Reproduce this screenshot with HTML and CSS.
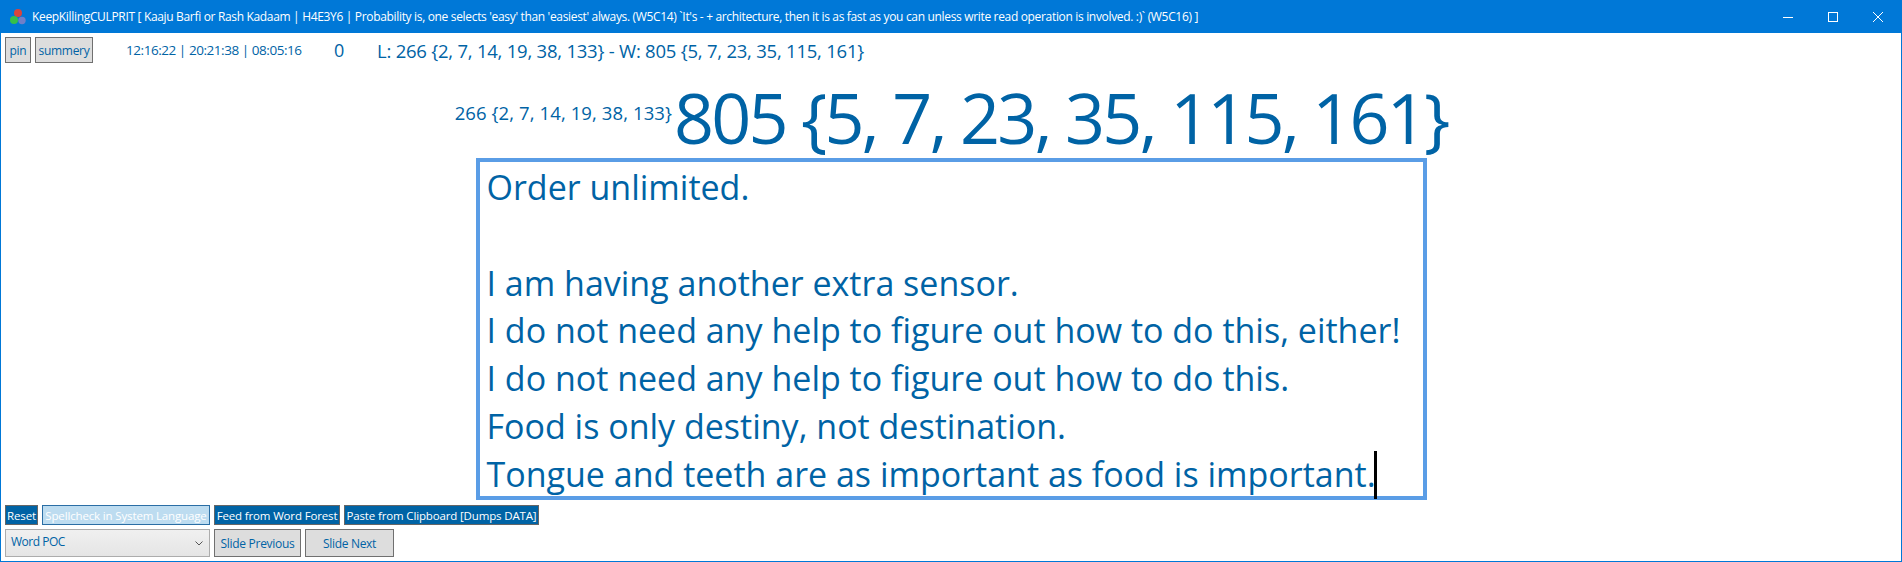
FILE: index.html
```html
<!DOCTYPE html>
<html lang="en">
<head>
<meta charset="utf-8">
<title>KeepKillingCULPRIT</title>
<link rel="stylesheet" href="styles.css">
</head>
<body>
<div class="window">
  <header class="titlebar">
    <svg class="app-icon" width="18" height="18" viewBox="0 0 18 18"><circle cx="9" cy="5" r="4" fill="#d9453c"/><circle cx="5" cy="12" r="4" fill="#35c04a"/><circle cx="13" cy="12.500" r="3.700" fill="#6f7fc8"/></svg>
    <span class="title">KeepKillingCULPRIT [ Kaaju Barfi or Rash Kadaam | H4E3Y6 | Probability is, one selects 'easy' than 'easiest' always. (W5C14) `It's - + architecture, then it is as fast as you can unless write read operation is involved. :)` (W5C16) ]</span>
    <div class="controls">
      <svg width="10" height="10" viewBox="0 0 10 10"><path d="M0 5.500H10" stroke="#fff" fill="none"/></svg>
      <svg width="10" height="10" viewBox="0 0 10 10"><rect x=".5" y=".5" width="9" height="9" stroke="#fff" fill="none"/></svg>
      <svg width="10" height="10" viewBox="0 0 10 10"><path d="M0 0L10 10M10 0L0 10" stroke="#fff" fill="none"/></svg>
    </div>
  </header>
  <div class="toprow">
    <button class="btn grey pin">pin</button>
    <button class="btn grey summery">summery</button>
    <span class="times">12:16:22 | 20:21:38 | 08:05:16</span>
    <span class="zero">0</span>
    <span class="stats">L: 266 {2, 7, 14, 19, 38, 133} - W: 805 {5, 7, 23, 35, 115, 161}</span>
  </div>
  <main class="center">
    <div class="scores"><span class="small">266 {2, 7, 14, 19, 38, 133}</span><span class="big">805 {5, 7, 23, 35, 115, 161}</span></div>
    <div class="editor">Order unlimited.<br><br>I am having another extra sensor.<br>I do not need any help to figure out how to do this, either!<br>I do not need any help to figure out how to do this.<br>Food is only destiny, not destination.<br>Tongue and teeth are as important as food is important.<span class="caret"></span></div>
  </main>
  <div class="row1">
    <button class="btn dark reset">Reset</button>
    <button class="btn light spell">Spellcheck in System Language</button>
    <button class="btn dark feed">Feed from Word Forest</button>
    <button class="btn dark paste">Paste from Clipboard [Dumps DATA]</button>
  </div>
  <div class="row2">
    <div class="select"><span>Word POC</span><svg width="8" height="5" viewBox="0 0 8 5"><path d="M.5 .5L4 4L7.500 .5" stroke="#555" fill="none"/></svg></div>
    <button class="btn grey prev">Slide Previous</button>
    <button class="btn grey next">Slide Next</button>
  </div>
</div>
</body>
</html>
```
FILE: styles.css
```css
* { box-sizing: border-box; }
html, body { margin: 0; height: 100%; overflow: hidden; }
body { font-family: "Open Sans", "Noto Sans", sans-serif; color: #0063a5; background: #fff; }
.window { height: 562px; display: flex; flex-direction: column; border: 1px solid #0078d7; border-top: 0; }
.titlebar { height: 33px; flex: none; background: #0078d7; color: #fff; display: flex; align-items: center; padding-left: 9px; margin: 0 -1px; }
.app-icon { flex: none; margin-right: 5px; }
.title { font-size: 12px; white-space: nowrap; letter-spacing: -.33px; }
.controls { margin-left: auto; display: flex; gap: 35px; padding-right: 19px; }
.btn { font: inherit; padding: 0; border: 1px solid #707070; background: #ddd; color: #0063a5; font-size: 12px; white-space: nowrap; letter-spacing: -.3px; }
.toprow { display: flex; align-items: center; height: 26px; margin-top: 4px; padding-left: 4px; flex: none; }
.pin { width: 26px; height: 26px; }
.summery { width: 58px; height: 26px; margin-left: 4px; }
.times { font-size: 13.500px; margin-left: 33px; letter-spacing: -.45px; width: 208px; }
.zero { font-size: 18px; width: 43px; }
.stats { font-size: 18.500px; letter-spacing: -.23px; white-space: nowrap; }
.center { flex: 1; display: flex; flex-direction: column; align-items: center; min-height: 0; }
.scores { display: flex; align-items: flex-start; height: 95px; white-space: nowrap; }
.small { font-size: 18.500px; letter-spacing: .1px; margin-top: 37px; }
.big { font-size: 70px; line-height: 80px; letter-spacing: -2.83px; margin-top: 14px; margin-left: 2px; }
.editor { width: 951px; height: 342px; border: 4px solid #5a9de6; padding: 2px 6px 2px 7px; font-size: 34px; line-height: 47.800px; letter-spacing: 0; white-space: nowrap; }
.caret { display: inline-block; width: 3px; height: 48px; background: #000; vertical-align: -12px; margin-left: -2px; }
.row1 { display: flex; height: 20px; padding-left: 4px; margin-top: 5px; flex: none; }
.dark { background: #0063a5; color: #fff; }
.light { background: #bddcf0; color: #fff; }
.row1 .btn { font-size: 11.500px; border-color: #666; letter-spacing: -.15px; }
.row1 .light { border-color: #2a6ea5; }
.reset { width: 33px; }
.spell { width: 168px; margin-left: 4px; }
.feed { width: 126px; margin-left: 4px; }
.paste { width: 195px; margin-left: 4px; }
.row2 { display: flex; height: 28px; padding-left: 4px; margin: 4px 0 4px; flex: none; }
.select { width: 205px; border: 1px solid #acacac; background: linear-gradient(#f0f0f0, #e5e5e5); font-size: 12px; display: flex; align-items: center; justify-content: space-between; padding: 0 6px 4px 5px; letter-spacing: -.5px; }
.select svg { margin-top: 4px; }
.prev { width: 87px; margin-left: 4px; }
.next { width: 89px; margin-left: 4px; }
```
